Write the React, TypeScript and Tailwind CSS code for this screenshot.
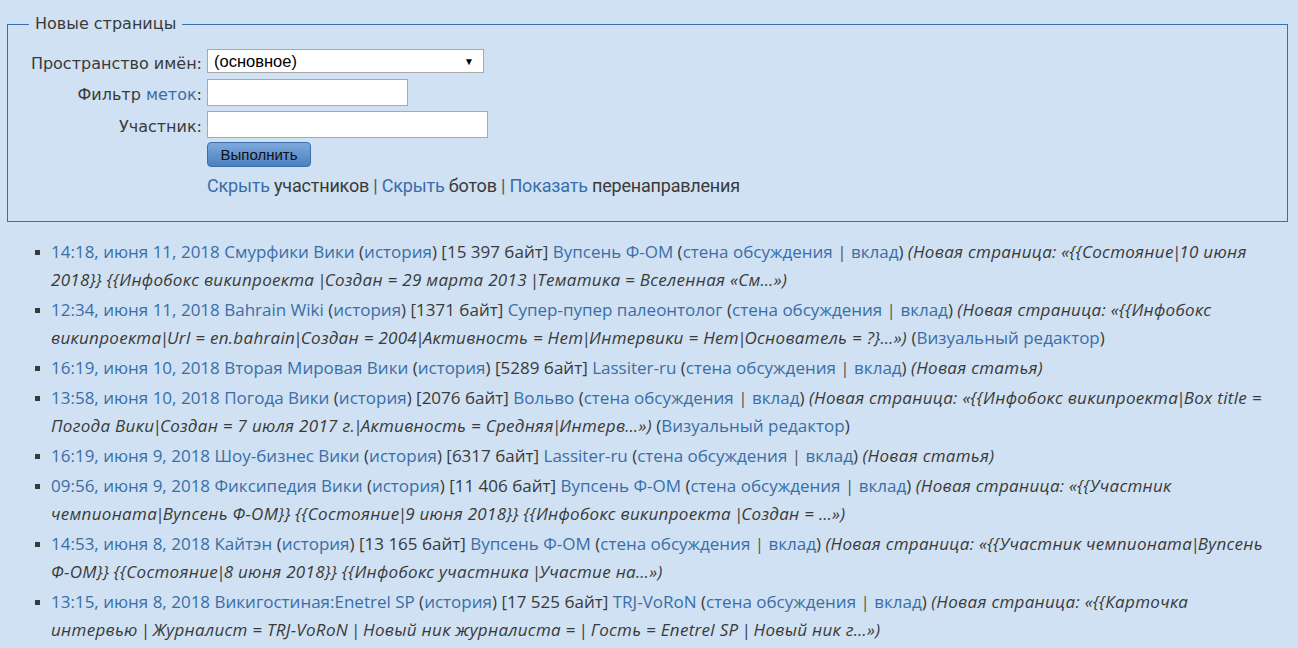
import React from "react";

const L = ({ children }: { children: React.ReactNode }) => (
  <span className="text-[#3a6ea8]">{children}</span>
);
const Sep = () => <span className="text-[#555]">|</span>;
const I = ({ text }: { text: string }) => {
  const parts = text.split("|");
  return (
    <span className="italic text-[#3a3a3a] tracking-[0.3px]">
      {parts.map((p, i) => (
        <React.Fragment key={i}>
          {i > 0 && <span className="-mx-[2px]">|</span>}
          {p}
        </React.Fragment>
      ))}
    </span>
  );
};

type Row = {
  time: string;
  page: string;
  size: string;
  user: string;
  s1: string;
  s2?: string;
  ve?: boolean;
};

const rows: Row[] = [
  {
    time: "14:18, июня 11, 2018",
    page: "Смурфики Вики",
    size: "15 397 байт",
    user: "Вупсень Ф-ОМ",
    s1: "(Новая страница: «{{Состояние|10 июня",
    s2: "2018}} {{Инфобокс википроекта |Создан = 29 марта 2013 |Тематика = Вселенная «См…»)",
  },
  {
    time: "12:34, июня 11, 2018",
    page: "Bahrain Wiki",
    size: "1371 байт",
    user: "Супер-пупер палеонтолог",
    s1: "(Новая страница: «{{Инфобокс",
    s2: "википроекта|Url = en.bahrain|Создан = 2004|Активность = Нет|Интервики = Нет|Основатель = ?}…»)",
    ve: true,
  },
  {
    time: "16:19, июня 10, 2018",
    page: "Вторая Мировая Вики",
    size: "5289 байт",
    user: "Lassiter-ru",
    s1: "(Новая статья)",
  },
  {
    time: "13:58, июня 10, 2018",
    page: "Погода Вики",
    size: "2076 байт",
    user: "Вольво",
    s1: "(Новая страница: «{{Инфобокс википроекта|Box title =",
    s2: "Погода Вики|Создан = 7 июля 2017 г.|Активность = Средняя|Интерв…»)",
    ve: true,
  },
  {
    time: "16:19, июня 9, 2018",
    page: "Шоу-бизнес Вики",
    size: "6317 байт",
    user: "Lassiter-ru",
    s1: "(Новая статья)",
  },
  {
    time: "09:56, июня 9, 2018",
    page: "Фиксипедия Вики",
    size: "11 406 байт",
    user: "Вупсень Ф-ОМ",
    s1: "(Новая страница: «{{Участник",
    s2: "чемпионата|Вупсень Ф-ОМ}} {{Состояние|9 июня 2018}} {{Инфобокс википроекта |Создан = …»)",
  },
  {
    time: "14:53, июня 8, 2018",
    page: "Кайтэн",
    size: "13 165 байт",
    user: "Вупсень Ф-ОМ",
    s1: "(Новая страница: «{{Участник чемпионата|Вупсень",
    s2: "Ф-ОМ}} {{Состояние|8 июня 2018}} {{Инфобокс участника |Участие на…»)",
  },
  {
    time: "13:15, июня 8, 2018",
    page: "Викигостиная:Enetrel SP",
    size: "17 525 байт",
    user: "TRJ-VoRoN",
    s1: "(Новая страница: «{{Карточка",
    s2: "интервью | Журналист = TRJ-VoRoN | Новый ник журналиста = | Гость = Enetrel SP | Новый ник г…»)",
  },
];

export default function App() {
  return (
    <div className="min-h-[648px] w-full bg-[#cfe1f2] text-[#3a3a3a] pt-[12px] px-[7px] pb-4">
      <fieldset className="border border-[#3a6fae] mx-0 px-[20px] pt-[13px] pb-[25px] min-w-0 w-[1281px]">
        <legend
          className="px-[6px] ml-[1px] text-[16px] text-[#3a3a3a]"
          style={{ fontFamily: '"DejaVu Sans", sans-serif' }}
        >
          Новые страницы
        </legend>
        <div
          className="grid grid-cols-[174px_auto] gap-x-[5px] items-center text-[16px]"
          style={{ fontFamily: '"DejaVu Sans", sans-serif' }}
        >
          <div className="text-right leading-[20px] whitespace-nowrap -ml-[4px]">Пространство имён:</div>
          <div className="mb-[6px]">
            <div
              className="w-[277px] h-[24px] bg-white border border-[#a9a9a9] flex items-center justify-between pl-[6px] pr-[9px] text-[16.5px] text-black"
              style={{ fontFamily: '"Liberation Sans", Arial, sans-serif' }}
            >
              <span>(основное)</span>
              <span className="text-[10px]">▼</span>
            </div>
          </div>
          <div className="text-right leading-[20px]">
            Фильтр <L>меток</L>:
          </div>
          <div className="mb-[5px]">
            <div className="w-[201px] h-[27px] bg-white border border-[#a9a9a9]" />
          </div>
          <div className="text-right leading-[20px]">Участник:</div>
          <div className="mb-[4px]">
            <div className="w-[281px] h-[27px] bg-white border border-[#a9a9a9]" />
          </div>
          <div />
          <div>
            <button
              className="w-[104px] h-[25px] rounded-[4px] border border-[#3e6ea8] bg-gradient-to-b from-[#7eaadd] to-[#4a7fc0] text-[15px] text-[#111] leading-none"
              style={{ fontFamily: '"Liberation Sans", Arial, sans-serif' }}
            >
              Выполнить
            </button>
          </div>
          <div />
          <div
            className="mt-[9px] text-[18px] leading-[20px] tracking-[-0.2px] whitespace-nowrap"
            style={{ fontFamily: 'Roboto, "Liberation Sans", sans-serif' }}
          >
            <L>Скрыть</L> участников <Sep /> <L>Скрыть</L> ботов <Sep />{" "}
            <L>Показать</L> перенаправления
          </div>
        </div>
      </fieldset>

      <ul
        className="mt-[16px] ml-[28px] text-[17px] leading-[28px] text-[#3a3a3a]"
        style={{ fontFamily: '"Open Sans", sans-serif' }}
      >
        {rows.map((r, i) => (
          <li key={i} className="flex mb-[2px]">
            <span className="w-[16px] shrink-0 flex pt-[12px]">
              <span className="block w-[5px] h-[5px] bg-[#3a3a3a]" />
            </span>
            <span className="flex-1 flex flex-col">
              <span className="whitespace-nowrap">
                <L>{r.time}</L> <L>{r.page}</L> (<L>история</L>) [{r.size}]{" "}
                <L>{r.user}</L> (<L>стена обсуждения</L> <Sep /> <L>вклад</L>){" "}
                <I text={r.s1} />
                {r.ve && !r.s2 && (
                  <>
                    {" "}(<L>Визуальный редактор</L>)
                  </>
                )}
              </span>
              {r.s2 && (
                <span className="whitespace-nowrap">
                  <I text={r.s2} />
                  {r.ve && (
                    <>
                      {" "}(<L>Визуальный редактор</L>)
                    </>
                  )}
                </span>
              )}
            </span>
          </li>
        ))}
      </ul>
    </div>
  );
}
